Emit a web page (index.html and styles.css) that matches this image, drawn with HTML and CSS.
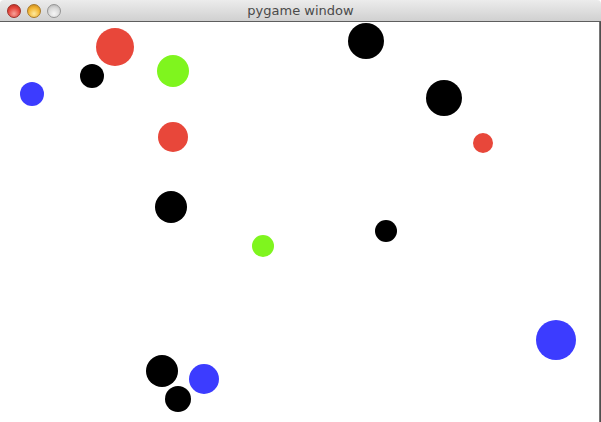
FILE: index.html
```html
<!DOCTYPE html>
<html>
<head>
<meta charset="utf-8">
<link rel="stylesheet" href="styles.css">
</head>
<body>
<div class="window">
  <div class="titlebar">
    <div class="lights">
      <span class="light red"></span>
      <span class="light yellow"></span>
      <span class="light grey"></span>
    </div>
    <div class="title">pygame window</div>
  </div>
  <div class="content">
    <div class="canvas">
      <span class="dot red" style="left:96px;top:6px;width:38px;height:38px"></span>
      <span class="dot black" style="left:80px;top:42px;width:24px;height:24px"></span>
      <span class="dot green" style="left:157px;top:33px;width:32px;height:32px"></span>
      <span class="dot blue" style="left:20px;top:60px;width:24px;height:24px"></span>
      <span class="dot red" style="left:158px;top:100px;width:30px;height:30px"></span>
      <span class="dot black" style="left:348px;top:1px;width:36px;height:36px"></span>
      <span class="dot black" style="left:426px;top:58px;width:36px;height:36px"></span>
      <span class="dot red" style="left:473px;top:111px;width:20px;height:20px"></span>
      <span class="dot black" style="left:155px;top:169px;width:32px;height:32px"></span>
      <span class="dot green" style="left:252px;top:213px;width:22px;height:22px"></span>
      <span class="dot black" style="left:375px;top:198px;width:22px;height:22px"></span>
      <span class="dot black" style="left:146px;top:333px;width:32px;height:32px"></span>
      <span class="dot blue" style="left:189px;top:342px;width:30px;height:30px"></span>
      <span class="dot black" style="left:165px;top:364px;width:26px;height:26px"></span>
      <span class="dot blue" style="left:536px;top:298px;width:40px;height:40px"></span>
    </div>
    <div class="edge"></div>
  </div>
</div>
</body>
</html>
```
FILE: styles.css
```css
html, body {
  margin: 0;
  padding: 0;
  background: #ffffff;
}
.window {
  width: 601px;
  height: 422px;
  display: flex;
  flex-direction: column;
  overflow: hidden;
}
.titlebar {
  height: 21px;
  border-bottom: 1px solid #5e5e5e;
  background: linear-gradient(#ececec, #d0d0d0);
  position: relative;
  display: flex;
  align-items: center;
  border-radius: 4px 4px 0 0;
  flex-shrink: 0;
}
.lights {
  display: flex;
  gap: 6px;
  padding-left: 7px;
}
.light {
  width: 14px;
  height: 14px;
  border-radius: 50%;
  box-sizing: border-box;
}
.light.red {
  background: radial-gradient(circle at 50% 72%, #f7a39a, #e5463c 55%, #b0241d);
  border: 1px solid #9c3028;
}
.light.yellow {
  background: radial-gradient(circle at 50% 72%, #fde9a0, #f3b632 55%, #bb7c1a);
  border: 1px solid #a97a28;
}
.light.grey {
  background: radial-gradient(circle at 50% 72%, #f6f6f6, #d8d8d8 55%, #ababab);
  border: 1px solid #959595;
}
.title {
  position: absolute;
  left: 0;
  right: 0;
  top: 0;
  height: 21px;
  line-height: 21px;
  text-align: center;
  font-family: "DejaVu Sans", sans-serif;
  font-size: 13px;
  color: #4a4a4a;
}
.content {
  flex: 1;
  display: flex;
}
.canvas {
  flex: 1;
  position: relative;
  background: #ffffff;
}
.edge {
  width: 2px;
  background: linear-gradient(90deg, #8a8a8a, #3a3a3a);
}
.dot {
  position: absolute;
  border-radius: 50%;
}
.dot.red { background: #e8473a; }
.dot.black { background: #000000; }
.dot.green { background: #7ff51e; }
.dot.blue { background: #3c3cff; }
```
